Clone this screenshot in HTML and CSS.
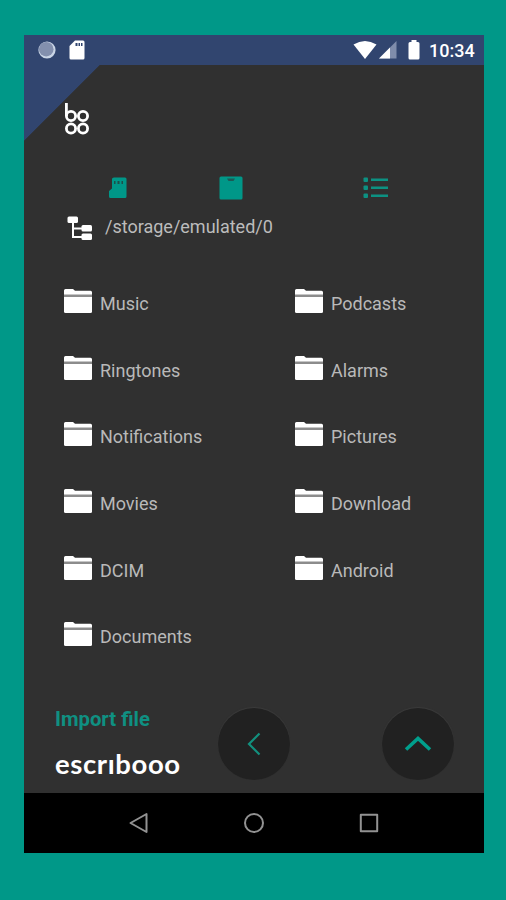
FILE: index.html
```html
<!DOCTYPE html>
<html lang="en">
<head>
<meta charset="utf-8">
<title>Import file</title>
<link rel="stylesheet" href="styles.css">
</head>
<body>
<svg class="defs" width="0" height="0" aria-hidden="true">
  <symbol id="folder" viewBox="0 0 30 26">
    <path d="M1 7V2.5Q1 1 2.5 1H10l2 1.8h15.500Q29 2.800 29 4.300V7Z" fill="#fff"/>
    <path d="M1 6.500h28v2.500H1z" fill="#8c8c8c"/>
    <path d="M1 9h28v14.500q0 1.500-1.500 1.500h-25Q1 25 1 23.500Z" fill="#fff"/>
  </symbol>
</svg>
<div class="phone">
  <header class="status">
    <svg class="sync" width="20" height="20" viewBox="0 0 20 20"><circle cx="10" cy="10" r="8.600" fill="#c9d5e6"/><circle cx="9.200" cy="9.200" r="7.300" fill="#8390ae"/></svg>
    <svg class="card" width="16" height="20" viewBox="0 0 16 20"><path d="M6 .5h8Q15.500.5 15.500 2v16q0 1.500-1.500 1.500H2Q.5 19.500.5 18V6Z" fill="#fff"/><path d="M6.500 3h2v3h-2zM9.500 3h1.500v3H9.500zM12 3h1.500v3H12z" fill="#31456f"/></svg>
    <span class="spacer"></span>
    <svg width="24" height="20" viewBox="0 0 24 20"><path d="M.5 4.500Q12-2.500 23.500 4.500L12 19Z" fill="#fff"/></svg>
    <svg class="signal" width="18" height="18" viewBox="0 0 18 18"><path d="M0 17.500 17.500 0v17.500Z" fill="#7f8dab"/><path d="M0 17.500 11 6.500v11Z" fill="#fff"/></svg>
    <svg class="battery" width="12" height="20" viewBox="0 0 12 20"><path d="M3.500 0h5v2h1.500q1.500 0 1.500 1.500v14.500q0 1.500-1.500 1.500H2Q.5 19.500.5 18V3.500Q.5 2 2 2h1.500Z" fill="#fff"/></svg>
    <span class="time">10:34</span>
  </header>
  <main class="content">
    <div class="brand">
      <svg width="26" height="34" viewBox="0 0 26 34" fill="none" stroke="#fff" stroke-width="2.800"><path d="M2.400 1v13"/><circle cx="7" cy="14" r="4.600"/><circle cx="19" cy="14" r="4.600"/><circle cx="7" cy="26.500" r="4.600"/><circle cx="19" cy="26.500" r="4.600"/></svg>
    </div>
    <div class="tools">
      <svg class="t-card" width="18" height="22" viewBox="0 0 18 22"><path d="M5 .5h11q1.500 0 1.500 1.500v17.500q0 1.500-1.500 1.500H1.500Q0 21 0 19.500V14l3-2.500V2Q3 .5 5 .5Z" fill="#009788"/><path d="M5 4h1.500v3H5zM8.500 4h2v3h-2zM12.500 4H14v3h-1.500z" fill="#1c4f49"/></svg>
      <svg class="t-box" width="24" height="24" viewBox="0 0 24 24"><rect x=".5" y=".5" width="23" height="23" rx="1.500" fill="#009788"/><path d="M8 2.500h8l-1.500 2.500h-5z" fill="#1d5a55"/></svg>
      <svg class="t-list" width="26" height="22" viewBox="0 0 26 22" fill="#0c9182"><rect x=".5" y=".5" width="4.500" height="4.500" rx="1"/><rect x=".5" y="8.500" width="4.500" height="4.500" rx="1"/><rect x=".5" y="16.500" width="4.500" height="4.500" rx="1"/><path d="M8 1.500h17V4H8zM8 9.500h17V12H8zM8 17.500h17V20H8z"/></svg>
    </div>
    <div class="path">
      <svg width="26" height="25" viewBox="0 0 26 25"><path d="M6 6v15h10M6 12.500h10" fill="none" stroke="#fff" stroke-width="2"/><g fill="#fff"><rect x=".5" y=".5" width="10.500" height="6.500" rx="1.500"/><rect x="14.500" y="9" width="10.500" height="6.500" rx="1.500"/><rect x="14.500" y="17.500" width="10.500" height="6.500" rx="1.500"/></g></svg>
      <span>/storage/emulated/0</span>
    </div>
    <div class="folders">
      <div class="folder"><svg><use href="#folder"/></svg><span>Music</span></div>
      <div class="folder"><svg><use href="#folder"/></svg><span>Podcasts</span></div>
      <div class="folder"><svg><use href="#folder"/></svg><span>Ringtones</span></div>
      <div class="folder"><svg><use href="#folder"/></svg><span>Alarms</span></div>
      <div class="folder"><svg><use href="#folder"/></svg><span>Notifications</span></div>
      <div class="folder"><svg><use href="#folder"/></svg><span>Pictures</span></div>
      <div class="folder"><svg><use href="#folder"/></svg><span>Movies</span></div>
      <div class="folder"><svg><use href="#folder"/></svg><span>Download</span></div>
      <div class="folder"><svg><use href="#folder"/></svg><span>DCIM</span></div>
      <div class="folder"><svg><use href="#folder"/></svg><span>Android</span></div>
      <div class="folder"><svg><use href="#folder"/></svg><span>Documents</span></div>
    </div>
    <footer class="bottom">
      <div class="labels">
        <div class="import">Import file</div>
        <div class="wordmark">escrıbooo</div>
      </div>
      <div class="round"><svg width="28" height="28" viewBox="0 0 28 28"><path d="M19.500 3.500 9 14l10.500 10.500" fill="none" stroke="#12907e" stroke-width="2.200"/></svg></div>
      <div class="round up"><svg width="28" height="28" viewBox="0 0 28 28"><path d="M2 19.500 14 8.500l12 11" fill="none" stroke="#009f8c" stroke-width="3.600"/></svg></div>
    </footer>
  </main>
  <nav class="nav">
    <svg width="22" height="22" viewBox="0 0 22 22"><path d="M18.500 2v18L2.500 11Z"/></svg>
    <svg width="22" height="22" viewBox="0 0 22 22"><circle cx="11" cy="11" r="9"/></svg>
    <svg width="22" height="22" viewBox="0 0 22 22"><rect x="2.800" y="2.800" width="16.400" height="16.400"/></svg>
  </nav>
</div>
</body>
</html>
```
FILE: styles.css
```css
* { box-sizing: border-box; }
body {
  margin: 0;
  height: 900px;
  padding: 35px 22px 47px 24px;
  background: #009888;
  font-family: Roboto, "Liberation Sans", sans-serif;
  overflow: hidden;
}
svg { display: block; flex: none; }
.defs { position: absolute; }
.phone { width: 460px; height: 818px; background: #303030; }
.status {
  height: 30px;
  padding: 0 9px 0 13px;
  display: flex;
  align-items: center;
  background: #31456f;
}
.card { margin-left: 12px; }
.spacer { flex: 1; }
.signal { margin-left: 2px; }
.battery { margin-left: 11px; }
.time {
  width: 46px;
  margin-left: 9px;
  color: #fff;
  font-size: 18px;
  font-weight: 500;
  line-height: 31px;
  white-space: nowrap;
}
.content {
  height: 728px;
  background: linear-gradient(135deg, #31456f 53.200px, #303030 53.900px);
}
.brand { height: 110px; padding: 37px 0 0 40px; }
.tools { height: 26px; display: flex; align-items: center; padding-left: 85px; }
.t-box { margin-left: 92px; }
.t-list { margin-left: 120px; }
.path {
  height: 48px;
  padding: 4px 0 0 43px;
  display: flex;
  align-items: center;
  gap: 12px;
  color: #bcbcbc;
  font-size: 18px;
  line-height: 24px;
}
.path svg { margin-top: 3px; }
.folders {
  margin-top: 21px;
  display: grid;
  grid-template-columns: 231px 229px;
  grid-auto-rows: 66.600px;
}
.folder {
  display: flex;
  align-items: center;
  gap: 7px;
  padding-left: 39px;
  color: #b9b9b9;
  font-size: 18px;
}
.folder svg { width: 30px; height: 26px; margin-top: -4px; }
.folder span { padding-top: 1px; }
.bottom { display: flex; padding: 38px 0 0 31px; }
.labels { width: 163px; }
.import {
  color: #0f9082;
  font-size: 20.300px;
  font-weight: 700;
  line-height: 24px;
  margin-top: -1px;
}
.wordmark {
  margin-top: 16px;
  color: #fff;
  font: 700 27.500px/34px Lato, sans-serif;
  letter-spacing: 0.600px;
}
.round {
  width: 72px;
  height: 72px;
  border-radius: 50%;
  background: #212121;
  box-shadow: 0 -1px 1px #3b3b3b;
  display: flex;
  align-items: center;
  justify-content: center;
}
.up { margin-left: 92px; }
.nav {
  height: 60px;
  background: #000;
  display: flex;
  justify-content: center;
  align-items: center;
  gap: 93px;
}
.nav svg { fill: none; stroke: #929292; stroke-width: 2; stroke-linejoin: round; }
```
